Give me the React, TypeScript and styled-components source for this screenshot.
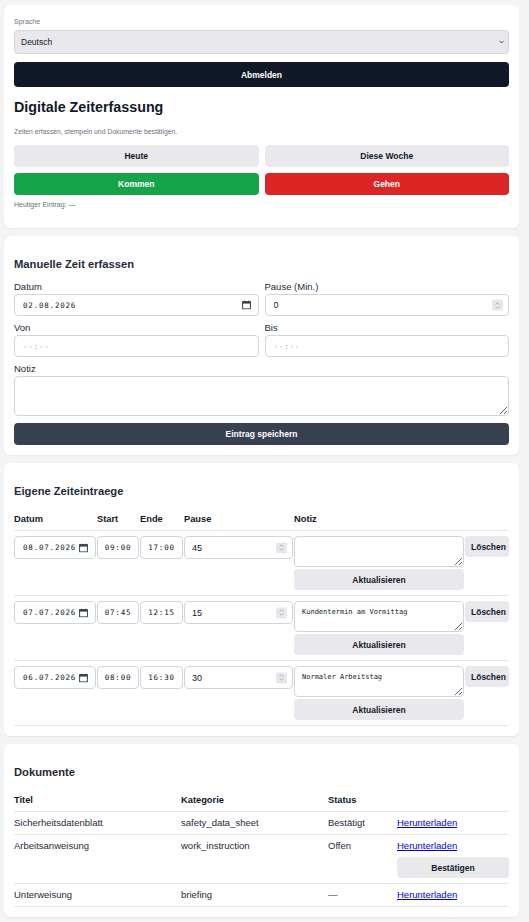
import styled, { createGlobalStyle } from "styled-components";

const GlobalStyle = createGlobalStyle`
  html, body {
    margin: 0;
    padding: 0;
    background: #f3f4f6;
    font-family: "Liberation Sans", Arial, sans-serif;
    color: #111827;
  }
  * { box-sizing: border-box; }
`;

const Page = styled.div`
  display: flex;
  flex-direction: column;
  gap: 8px;
  padding: 5px 10px 5px 4px;
`;

const Card = styled.section<{ $top?: number }>`
  background: #ffffff;
  border-radius: 6px;
  box-shadow: 0 1px 2px rgba(0, 0, 0, 0.06);
  padding: ${(p) => p.$top ?? 10}px 10px 10px;
  display: flex;
  flex-direction: column;
`;

const SmallLabel = styled.label`
  font-size: 7px;
  line-height: 10px;
  color: #6b7280;
  margin-bottom: 3px;
`;

const Wrap = styled.div`
  position: relative;
  width: 100%;
`;

const Select = styled.select`
  appearance: none;
  -webkit-appearance: none;
  display: block;
  height: 24px;
  width: 100%;
  background: #e8e8ed;
  border: 1px solid #d1d5db;
  border-radius: 4px;
  font-family: "Liberation Sans", Arial, sans-serif;
  font-size: 8.5px;
  color: #111827;
  padding: 0 6px;
`;

const Chevron = styled.svg`
  position: absolute;
  right: 5px;
  top: 10px;
  width: 5px;
  height: 4px;
  pointer-events: none;
`;

const Button = styled.button<{ $variant?: "dark" | "slate" | "light" | "green" | "red"; $h?: number }>`
  display: block;
  height: ${(p) => p.$h ?? 22}px;
  width: 100%;
  border: none;
  border-radius: 4px;
  font-family: "Liberation Sans", Arial, sans-serif;
  font-weight: 700;
  font-size: 8.5px;
  cursor: pointer;
  padding: 0 6px;
  background: ${(p) =>
    ({ dark: "#111827", slate: "#374151", light: "#e8e8ed", green: "#16a34a", red: "#dc2626" })[
      p.$variant ?? "light"
    ]};
  color: ${(p) => (p.$variant && p.$variant !== "light" ? "#ffffff" : "#111827")};
`;

const Title = styled.h1`
  font-size: 14.3px;
  line-height: 18px;
  font-weight: 700;
  margin: 11px 0 0;
`;

const Subtitle = styled.p`
  font-size: 6.8px;
  line-height: 10px;
  color: #6b7280;
  margin: 11px 0 0;
`;

const TwoCols = styled.div<{ $mt?: number }>`
  display: grid;
  grid-template-columns: 1fr 1fr;
  gap: 6px;
  margin-top: ${(p) => p.$mt ?? 0}px;
`;

const Muted = styled.div`
  font-size: 7px;
  line-height: 10px;
  color: #6b7280;
  margin-top: 5px;
  margin-bottom: 8px;
`;

const SectionTitle = styled.h2`
  font-size: 11.2px;
  line-height: 14px;
  font-weight: 700;
  color: #1f2937;
  margin: 11px 0 10px;
`;

const Field = styled.div<{ $span?: boolean }>`
  display: flex;
  flex-direction: column;
  grid-column: ${(p) => (p.$span ? "1 / -1" : "auto")};
`;

const FieldLabel = styled.label`
  font-size: 9.5px;
  line-height: 12px;
  color: #1f2937;
  margin-bottom: 1px;
`;

const Input = styled.input<{ $mono?: boolean; $h?: number; $center?: boolean; $pl?: number }>`
  display: block;
  height: ${(p) => p.$h ?? 22}px;
  width: 100%;
  border: 1px solid #d1d5db;
  border-radius: 4px;
  background: #ffffff;
  padding: 0 ${(p) => (p.$center ? 1 : 16)}px 0 ${(p) => (p.$center ? 1 : p.$pl ?? 8)}px;
  text-align: ${(p) => (p.$center ? "center" : "left")};
  font-family: ${(p) => (p.$mono ? '"DejaVu Sans Mono", monospace' : '"Liberation Sans", Arial, sans-serif')};
  font-size: ${(p) => (p.$mono ? 7.5 : 9)}px;
  letter-spacing: ${(p) => (p.$mono ? 0.8 : 0)}px;
  color: #111827;
  &::placeholder {
    color: #9ca3af;
  }
`;

const FieldIcon = styled.svg`
  position: absolute;
  right: 8px;
  top: 50%;
  transform: translateY(-50%);
  width: 9px;
  height: 9px;
  pointer-events: none;
`;

const Spinner = styled.span`
  position: absolute;
  right: 6px;
  top: 50%;
  transform: translateY(-50%);
  width: 11px;
  height: 11px;
  border-radius: 2px;
  background: #e5e7eb;
  display: flex;
  align-items: center;
  justify-content: center;
  pointer-events: none;
`;

const TextArea = styled.textarea<{ $h?: number }>`
  height: ${(p) => p.$h ?? 40}px;
  width: 100%;
  border: 1px solid #d1d5db;
  border-radius: 4px;
  padding: 6px 7px;
  font-family: "DejaVu Sans Mono", monospace;
  font-size: 7px;
  line-height: 9px;
  color: #111827;
  display: block;
`;

const Table = styled.table`
  width: 100%;
  border-collapse: collapse;
  table-layout: fixed;
`;

const Th = styled.th`
  text-align: left;
  font-size: 9.3px;
  line-height: 12px;
  font-weight: 700;
  color: #111827;
  padding: 5px 0;
  border-bottom: 1px solid #e5e7eb;
`;

const Td = styled.td<{ $pr?: number }>`
  vertical-align: top;
  padding: 5px ${(p) => p.$pr ?? 1}px 5px 0;
  border-bottom: 1px solid #e5e7eb;
  font-size: 9.5px;
  line-height: 12px;
  color: #1f2937;
`;

const Stack = styled.div`
  display: flex;
  flex-direction: column;
  gap: 2px;
`;

const DocLink = styled.a`
  color: #0000ee;
  text-decoration: underline;
  font-size: 9.5px;
  line-height: 12px;
`;

const ActionCell = styled.div`
  display: flex;
  flex-direction: column;
  gap: 5px;
`;

const CalendarIcon = () => (
  <FieldIcon viewBox="0 0 9 9">
    <rect x="0.6" y="1.1" width="7.8" height="7.3" fill="none" stroke="#374151" strokeWidth="1" />
    <rect x="0.6" y="1.1" width="7.8" height="2" fill="#374151" />
    <rect x="2" y="0" width="1" height="1.6" fill="#374151" />
    <rect x="6" y="0" width="1" height="1.6" fill="#374151" />
  </FieldIcon>
);

const SpinIcon = () => (
  <Spinner>
    <svg width="5" height="8" viewBox="0 0 5 8">
      <path d="M0.8 3 L2.5 1.2 L4.2 3 M0.8 5 L2.5 6.8 L4.2 5" fill="none" stroke="#9ca3af" strokeWidth="0.8" />
    </svg>
  </Spinner>
);

const DateField = ({ value, h }: { value: string; h?: number }) => (
  <Wrap>
    <Input type="text" $mono $h={h} defaultValue={value} />
    <CalendarIcon />
  </Wrap>
);

const NumberField = ({ value, h, pl }: { value: number; h?: number; pl?: number }) => (
  <Wrap>
    <Input type="text" inputMode="numeric" $h={h} $pl={pl} defaultValue={String(value)} />
    <SpinIcon />
  </Wrap>
);

const entries = [
  { date: "08.07.2026", start: "09:00", end: "17:00", pause: 45, note: "" },
  { date: "07.07.2026", start: "07:45", end: "12:15", pause: 15, note: "Kundentermin am Vormittag" },
  { date: "06.07.2026", start: "08:00", end: "16:30", pause: 30, note: "Normaler Arbeitstag" },
];

const docs = [
  { title: "Sicherheitsdatenblatt", category: "safety_data_sheet", status: "Bestätigt", confirm: false },
  { title: "Arbeitsanweisung", category: "work_instruction", status: "Offen", confirm: true },
  { title: "Unterweisung", category: "briefing", status: "—", confirm: false },
];

export default function App() {
  return (
    <>
      <GlobalStyle />
      <Page>
        <Card $top={12}>
          <SmallLabel>Sprache</SmallLabel>
          <Wrap>
            <Select defaultValue="de">
              <option value="de">Deutsch</option>
              <option value="en">English</option>
            </Select>
            <Chevron viewBox="0 0 5 4">
              <path d="M0.5 0.8 L2.5 3 L4.5 0.8" fill="none" stroke="#374151" strokeWidth="0.9" />
            </Chevron>
          </Wrap>
          <div style={{ marginTop: 8 }}>
            <Button $variant="dark" $h={25}>Abmelden</Button>
          </div>
          <Title>Digitale Zeiterfassung</Title>
          <Subtitle>Zeiten erfassen, stempeln und Dokumente bestätigen.</Subtitle>
          <TwoCols $mt={8}>
            <Button>Heute</Button>
            <Button>Diese Woche</Button>
            <Button $variant="green">Kommen</Button>
            <Button $variant="red">Gehen</Button>
          </TwoCols>
          <Muted>Heutiger Eintrag: —</Muted>
        </Card>

        <Card>
          <SectionTitle>Manuelle Zeit erfassen</SectionTitle>
          <TwoCols>
            <Field>
              <FieldLabel>Datum</FieldLabel>
              <DateField value="02.08.2026" />
            </Field>
            <Field>
              <FieldLabel>Pause (Min.)</FieldLabel>
              <NumberField value={0} />
            </Field>
            <Field>
              <FieldLabel>Von</FieldLabel>
              <Input type="text" $mono placeholder="--:--" />
            </Field>
            <Field>
              <FieldLabel>Bis</FieldLabel>
              <Input type="text" $mono placeholder="--:--" />
            </Field>
            <Field $span>
              <FieldLabel>Notiz</FieldLabel>
              <TextArea $h={40} />
            </Field>
          </TwoCols>
          <div style={{ marginTop: 7 }}>
            <Button $variant="slate">Eintrag speichern</Button>
          </div>
        </Card>

        <Card>
          <SectionTitle>Eigene Zeiteintraege</SectionTitle>
          <Table>
            <colgroup>
              <col style={{ width: 83 }} />
              <col style={{ width: 43 }} />
              <col style={{ width: 44 }} />
              <col style={{ width: 110 }} />
              <col style={{ width: 171 }} />
              <col style={{ width: 44 }} />
            </colgroup>
            <thead>
              <tr>
                <Th>Datum</Th>
                <Th>Start</Th>
                <Th>Ende</Th>
                <Th>Pause</Th>
                <Th>Notiz</Th>
                <Th></Th>
              </tr>
            </thead>
            <tbody>
              {entries.map((e) => (
                <tr key={e.date}>
                  <Td>
                    <DateField value={e.date} h={23} />
                  </Td>
                  <Td>
                    <Input type="text" $mono $center $h={23} defaultValue={e.start} />
                  </Td>
                  <Td>
                    <Input type="text" $mono $center $h={23} defaultValue={e.end} />
                  </Td>
                  <Td>
                    <NumberField value={e.pause} h={23} pl={7} />
                  </Td>
                  <Td>
                    <Stack>
                      <TextArea $h={31} defaultValue={e.note} />
                      <Button $h={21}>Aktualisieren</Button>
                    </Stack>
                  </Td>
                  <Td $pr={0}>
                    <Button $h={21}>Löschen</Button>
                  </Td>
                </tr>
              ))}
            </tbody>
          </Table>
        </Card>

        <Card>
          <SectionTitle>Dokumente</SectionTitle>
          <Table>
            <colgroup>
              <col style={{ width: 167 }} />
              <col style={{ width: 147 }} />
              <col style={{ width: 69 }} />
              <col style={{ width: 112 }} />
            </colgroup>
            <thead>
              <tr>
                <Th>Titel</Th>
                <Th>Kategorie</Th>
                <Th>Status</Th>
                <Th></Th>
              </tr>
            </thead>
            <tbody>
              {docs.map((d) => (
                <tr key={d.title}>
                  <Td>{d.title}</Td>
                  <Td>{d.category}</Td>
                  <Td>{d.status}</Td>
                  <Td $pr={0}>
                    <ActionCell>
                      <DocLink href="#">Herunterladen</DocLink>
                      {d.confirm && <Button $h={21}>Bestätigen</Button>}
                    </ActionCell>
                  </Td>
                </tr>
              ))}
            </tbody>
          </Table>
        </Card>
      </Page>
    </>
  );
}
